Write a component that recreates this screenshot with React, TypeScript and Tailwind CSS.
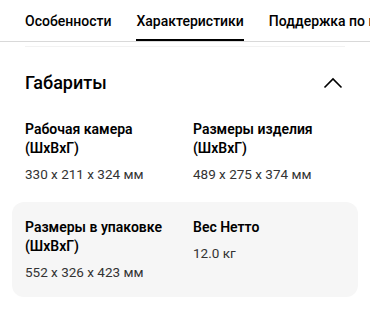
import { useState } from 'react'

const tabs = ['Особенности', 'Характеристики', 'Поддержка по продукту']

type Spec = { label: string[]; value: string }

const rows: Spec[][] = [
  [
    { label: ['Рабочая камера', '(ШхВхГ)'], value: '330 x 211 x 324 мм' },
    { label: ['Размеры изделия', '(ШхВхГ)'], value: '489 x 275 x 374 мм' },
  ],
  [
    { label: ['Размеры в упаковке', '(ШхВхГ)'], value: '552 x 326 x 423 мм' },
    { label: ['Вес Нетто'], value: '12.0 кг' },
  ],
]

function SpecCell({ spec }: { spec: Spec }) {
  return (
    <div className="flex flex-col">
      <div className="text-[14px] font-semibold leading-[19px] text-black">
        {spec.label.map((l, i) => (
          <div key={i}>{l}</div>
        ))}
      </div>
      <div className="mt-[7px] text-[13.5px] leading-[19px] text-[#333]">{spec.value}</div>
    </div>
  )
}

export default function App() {
  const [active] = useState(1)
  const [open, setOpen] = useState(true)

  return (
    <div
      className="w-[370px] h-[311px] overflow-hidden bg-white"
      style={{ fontFamily: 'Roboto, "Noto Sans", sans-serif' }}
    >
      {/* tabs */}
      <div className="border-b border-[#d9d9d9]">
        <div className="flex gap-[25px] pl-[25px] whitespace-nowrap">
          {tabs.map((t, i) => (
            <div
              key={t}
              className={
                'pt-[10px] pb-[7px] text-[14px] font-medium leading-[22px] text-black border-b-2 ' +
                (i === active ? 'border-black' : 'border-transparent')
              }
            >
              {t}
            </div>
          ))}
        </div>
      </div>
      <div className="mx-[25px] mt-[4px] border-t border-[#f2f2f2]" />

      {/* section */}
      <div className="flex items-center justify-between pl-[25px] pr-[27px] pt-[23px]">
        <h2 className="text-[18px] font-medium leading-[26px] text-black">Габариты</h2>
        <button onClick={() => setOpen(!open)} className="w-[20px] h-[20px] flex items-center justify-center">
          <svg width="20" height="12" viewBox="0 0 20 12" fill="none">
            <path d="M1.5 10.5 L10 2 L18.5 10.5" stroke="#000" strokeWidth="1.6" />
          </svg>
        </button>
      </div>

      {open && (
        <div className="flex flex-col gap-[3px] px-[12px] pt-[8px]">
          {rows.map((row, ri) => (
            <div
              key={ri}
              className={
                'grid grid-cols-[168px_1fr] px-[13px] pt-[16px] pb-[15px] rounded-[12px] ' +
                (ri === 1 ? 'bg-[#f6f6f6]' : '')
              }
            >
              {row.map((s, si) => (
                <SpecCell key={si} spec={s} />
              ))}
            </div>
          ))}
        </div>
      )}
    </div>
  )
}
